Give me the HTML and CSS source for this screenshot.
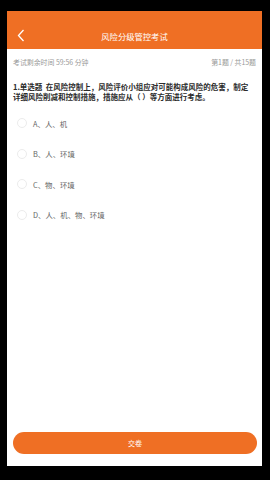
FILE: index.html
```html
<!DOCTYPE html>
<html lang="zh">
<head>
<meta charset="utf-8">
<link rel="stylesheet" href="styles.css">
</head>
<body>
<div class="phone">
  <div class="header">
    <div class="bar">
      <span class="back"><svg width="8" height="13" viewBox="0 0 8 13"><path d="M6.5 1 L1.5 6.5 L6.5 12" fill="none" stroke="#fff" stroke-width="1.3"/></svg></span>
      <span class="title">风险分级管控考试</span>
      <span></span>
    </div>
  </div>
  <div class="timer">
    <span>考试剩余时间 59:56 分钟</span>
    <span>第1题 / 共15题</span>
  </div>
  <div class="question">1.单选题&nbsp; 在风险控制上，风险评价小组应对可能构成风险的危害，制定详细风险削减和控制措施，措施应从（ ）等方面进行考虑。</div>
  <ul class="options">
    <li class="option"><span class="radio"></span><span>A、人、机</span></li>
    <li class="option"><span class="radio"></span><span>B、人、环境</span></li>
    <li class="option"><span class="radio"></span><span>C、物、环境</span></li>
    <li class="option"><span class="radio"></span><span>D、人、机、物、环境</span></li>
  </ul>
  <div class="spacer"></div>
  <button class="submit">交卷</button>
</div>
</body>
</html>
```

FILE: styles.css
```css
* { box-sizing: border-box; }
html, body {
  margin: 0;
  padding: 0;
  background: #000;
  width: 270px;
  height: 480px;
  overflow: hidden;
}
body {
  font-family: "Noto Sans CJK SC", "Noto Sans", sans-serif;
  padding-top: 11px;
}
.phone {
  margin-left: 7px;
  width: 255px;
  height: 455px;
  background: #fff;
  display: flex;
  flex-direction: column;
}
.header {
  background: #ef6f24;
  height: 38px;
  padding-top: 11px;
}
.bar {
  height: 27px;
  display: grid;
  grid-template-columns: 30px 1fr 30px;
  align-items: center;
}
.back {
  display: flex;
  align-items: center;
  padding-left: 10px;
  height: 13px;
}
.back svg { display: block; }
.title {
  text-align: center;
  color: #fff;
  font-size: 8.3px;
  line-height: 12px;
}
.timer {
  height: 26px;
  display: flex;
  align-items: center;
  justify-content: space-between;
  padding: 0 6px 0 6px;
  font-size: 6.9px;
  color: #999;
}
.question {
  margin-top: 7px;
  padding: 0 9px 0 6px;
  font-size: 7.5px;
  line-height: 10px;
  font-weight: bold;
  color: #2a2a2a;
}
.options {
  list-style: none;
  margin: 6px 0 0;
  padding: 0;
}
.option {
  height: 30.5px;
  display: flex;
  align-items: center;
  padding-left: 10px;
  gap: 6px;
  font-size: 7.4px;
  color: #666;
}
.radio {
  width: 10px;
  height: 10px;
  border-radius: 50%;
  border: 1px solid #ececec;
  flex: none;
}
.spacer { flex: 1; }
.submit {
  margin: 0 5px 12px 6px;
  height: 22px;
  border: none;
  border-radius: 11px;
  background: #ef6f24;
  color: #fff;
  font-family: inherit;
  font-size: 7px;
  padding: 0;
}
```
